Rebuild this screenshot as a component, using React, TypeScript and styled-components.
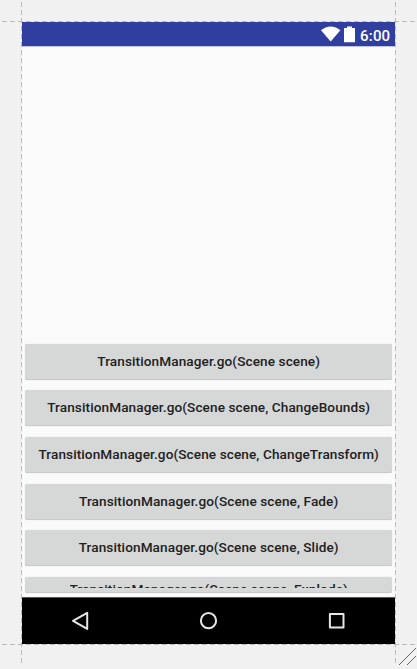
import React from 'react';
import styled, { createGlobalStyle } from 'styled-components';

const GlobalStyle = createGlobalStyle`
  * { box-sizing: border-box; }
  html, body { margin: 0; padding: 0; }
  body { background: #f1f1f1; font-family: Roboto, "Noto Sans", sans-serif; overflow: hidden; }
`;

const Canvas = styled.div`
  position: relative;
  width: 417px;
  height: 669px;
  padding: 22px 22px 25px;
  background: #f1f1f1;
`;

const Guides = styled.svg`
  position: absolute;
  inset: 0;
  pointer-events: none;
`;

const Device = styled.main`
  display: flex;
  flex-direction: column;
  width: 373px;
  height: 622px;
  background: #fafafa;
`;

const StatusBar = styled.header`
  display: flex;
  flex: none;
  justify-content: flex-end;
  height: 25px;
  padding-right: 5px;
  background: #303f9f;
  border-bottom: 1px solid #c0c4e3;
  color: #fff;
`;

const StatusIcons = styled.svg`
  flex: none;
  margin-right: 5px;
`;

const Clock = styled.span`
  font-size: 15px;
  font-weight: 500;
  letter-spacing: 0.2px;
  line-height: 28px;
  width: 30px;
  white-space: nowrap;
`;

const SceneRoot = styled.section`
  flex: none;
  height: 296.6px;
`;

const ButtonList = styled.section`
  display: flex;
  flex: 1;
  flex-direction: column;
  gap: 10.67px;
  padding: 0 3px 0 3.4px;
  min-height: 0;
`;

const SceneButton = styled.button<{ $clipped?: boolean }>`
  display: flex;
  flex: none;
  justify-content: center;
  height: ${p => (p.$clipped ? '16px' : '36px')};
  padding: ${p => (p.$clipped ? '4.4px 0 0' : '0 0 1.6px')};
  align-items: ${p => (p.$clipped ? 'flex-start' : 'center')};
  border: 0;
  border-radius: 2px;
  background: #d6d7d7;
  box-shadow: inset 0 -1px 0 #c8c9c9, 0 0 1px rgba(0, 0, 0, 0.2);
  color: #212121;
  font: 500 13.6px/16px Roboto, sans-serif;
  letter-spacing: 0.095px;
  white-space: nowrap;
`;

const Label = styled.span<{ $clipped?: boolean }>`
  display: block;
  height: ${p => (p.$clipped ? '6.5px' : '16px')};
  overflow: ${p => (p.$clipped ? 'hidden' : 'visible')};
`;

const NavBar = styled.nav`
  display: flex;
  flex: none;
  justify-content: space-between;
  align-items: center;
  height: 47px;
  padding: 0 49px 0 48px;
  border-top: 1px solid #555;
  background: #000;
`;

const NavIcon = styled.svg`
  fill: none;
  stroke: #e6e6e6;
  stroke-width: 2;
  stroke-linejoin: round;
`;

const transitions = ['', ', ChangeBounds', ', ChangeTransform', ', Fade', ', Slide', ', Explode'];

export default function App() {
  return (
    <>
      <GlobalStyle />
      <Canvas>
        <Device>
          <StatusBar>
            <StatusIcons width="34" height="24" viewBox="0 0 34 24" fill="#fff">
              <path d="M0 8.3C5.7 3.2 13.7 3.2 19.4 8.3L9.7 19.6Z" />
              <path d="M23 6h3V4.5h5V6h3v14.3H23Z" />
            </StatusIcons>
            <Clock>6:00</Clock>
          </StatusBar>
          <SceneRoot />
          <ButtonList>
            {transitions.map((name, i) => {
              const clipped = i === transitions.length - 1;
              return (
                <SceneButton key={name} type="button" $clipped={clipped}>
                  <Label $clipped={clipped}>{`TransitionManager.go(Scene scene${name})`}</Label>
                </SceneButton>
              );
            })}
          </ButtonList>
          <NavBar>
            <NavIcon width="20" height="20" viewBox="0 0 20 20">
              <path d="M3 9.8 17.2 1.8V17.9Z" />
            </NavIcon>
            <NavIcon width="20" height="20" viewBox="0 0 20 20">
              <circle cx="10.5" cy="9.7" r="7.6" />
            </NavIcon>
            <NavIcon width="20" height="20" viewBox="0 0 20 20">
              <rect x="3.9" y="2.9" width="13.6" height="13.6" />
            </NavIcon>
          </NavBar>
        </Device>
        <Guides width="417" height="669" viewBox="0 0 417 669">
          <g stroke="#bababa" strokeDasharray="5 3" shapeRendering="crispEdges">
            <path d="M2 21.5H416M2 644.5H416M21.5 2V664M395.5 2V664" />
          </g>
          <path d="M399 665 416 648M407 665 416 656" stroke="#666" shapeRendering="crispEdges" />
        </Guides>
      </Canvas>
    </>
  );
}
